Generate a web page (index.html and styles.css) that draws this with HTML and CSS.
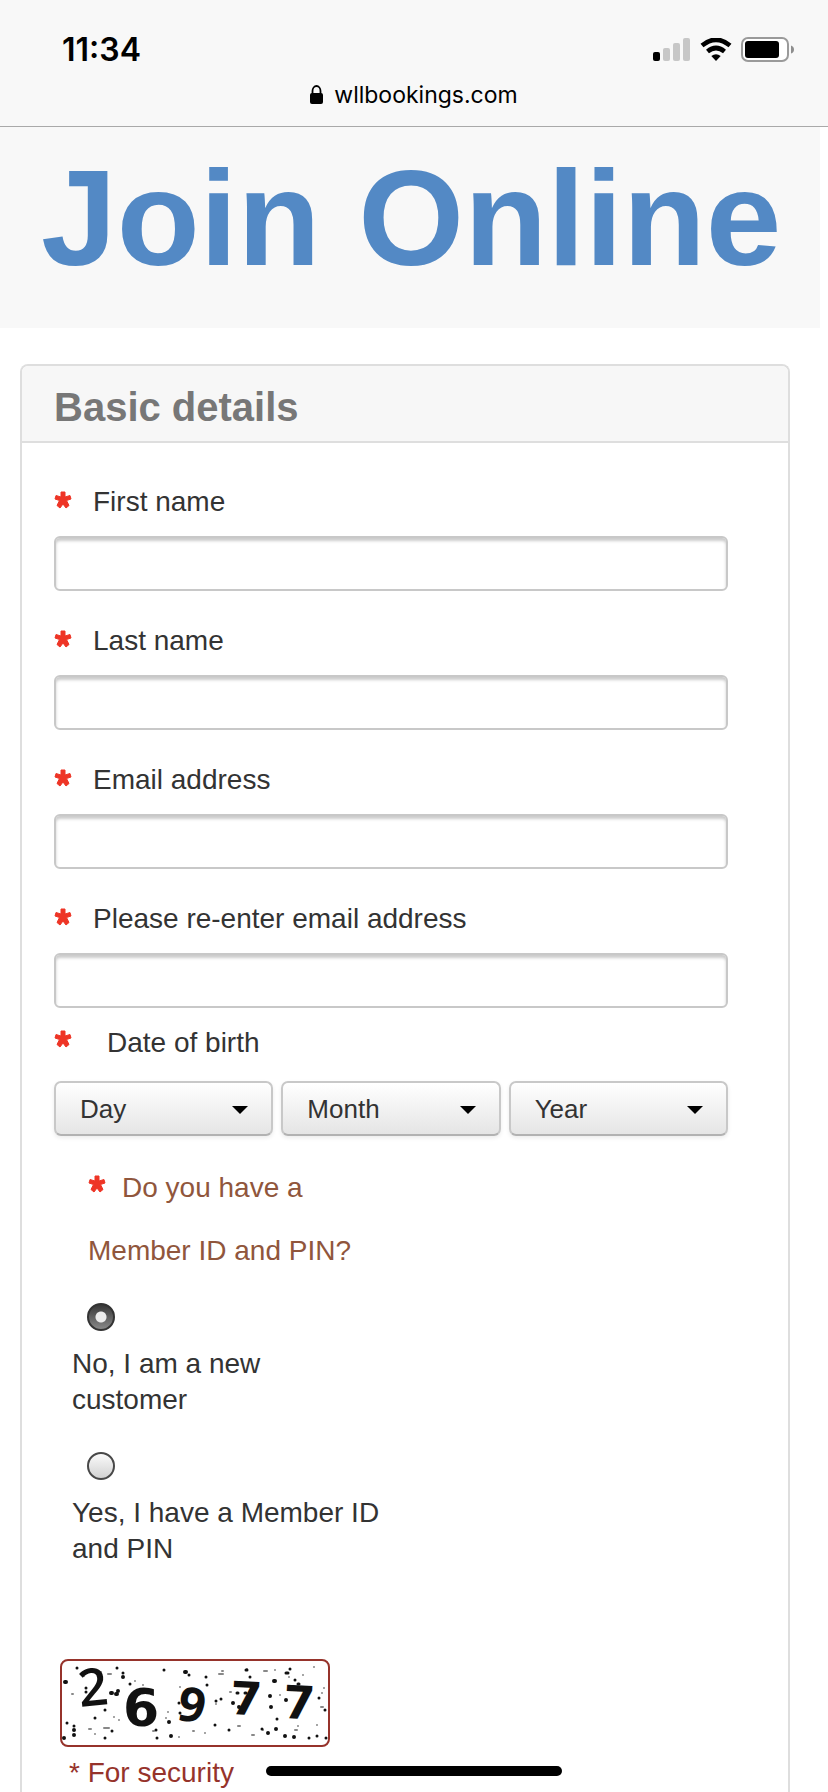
FILE: index.html
```html
<!DOCTYPE html>
<html lang="en">
<head>
    <meta charset="UTF-8">
    <meta name="viewport" content="width=device-width, initial-scale=1.0">
    <title>Join Online</title>
    <link rel="stylesheet" href="styles.css">
</head>
<body>
    <svg class="defs" width="0" height="0" aria-hidden="true">
        <symbol id="star" viewBox="0 0 18 18">
            <path d="M7 1h4v5l5-1.500 1 3.500-4.500 1.500 2.500 5-3 2.500-3-4-3 4-3-2.500 2.500-5L1 8l1-3.500L7 6Z" fill="#ee3526" stroke="#ee3526" stroke-width="1" stroke-linejoin="round"/>
        </symbol>
    </svg>

    <header class="browser-bar">
        <div class="status">
            <span class="time">11:34</span>
            <div class="status-icons">
                <svg width="38" height="24" viewBox="0 0 38 24" aria-hidden="true">
                    <rect x="0" y="14" width="7" height="9" rx="2" fill="#000"/>
                    <rect x="10" y="10" width="7" height="13" rx="2" fill="#c7c7c7"/>
                    <rect x="20" y="5" width="7" height="18" rx="2" fill="#c7c7c7"/>
                    <rect x="30" y="0" width="7" height="23" rx="2" fill="#c7c7c7"/>
                </svg>
                <svg width="32" height="24" viewBox="0 0 32 24" aria-hidden="true">
                    <path d="M2 7.500Q16 -4 30 7.500" fill="none" stroke="#000" stroke-width="4.600"/>
                    <path d="M7.500 13.500Q16 6.500 24.500 13.500" fill="none" stroke="#000" stroke-width="4.600"/>
                    <path d="M11.300 18Q16 14.300 20.700 18L16 23Z" fill="#000"/>
                </svg>
                <svg width="54" height="26" viewBox="0 0 54 26" aria-hidden="true">
                    <rect x="1" y="1" width="46" height="23" rx="6" fill="#fff" stroke="#9a9a9a" stroke-width="2"/>
                    <rect x="4" y="4" width="34" height="17" rx="3" fill="#000"/>
                    <path d="M50 8.500Q53 9.500 53 12.500Q53 15.500 50 16.500Z" fill="#8e8e8e"/>
                </svg>
            </div>
        </div>
        <div class="address">
            <svg width="14" height="20" viewBox="0 0 14 20" aria-hidden="true">
                <path d="M2.500 9V6a4 5 0 0 1 8 0V9" fill="none" stroke="#000" stroke-width="1.800"/>
                <rect x="0" y="8" width="13" height="11" rx="2" fill="#000"/>
            </svg>
            <span>wllbookings.com</span>
        </div>
    </header>

    <div class="banner">
        <h1>Join Online</h1>
    </div>

    <main class="panel">
        <h2>Basic details</h2>
        <form class="panel-body">
            <div class="field">
                <label for="firstName"><svg class="star"><use href="#star"/></svg>First name</label>
                <input type="text" id="firstName" name="firstName" required>
            </div>
            <div class="field">
                <label for="lastName"><svg class="star"><use href="#star"/></svg>Last name</label>
                <input type="text" id="lastName" name="lastName" required>
            </div>
            <div class="field">
                <label for="email"><svg class="star"><use href="#star"/></svg>Email address</label>
                <input type="email" id="email" name="email" required>
            </div>
            <div class="field">
                <label for="emailConfirm"><svg class="star"><use href="#star"/></svg>Please re-enter email address</label>
                <input type="email" id="emailConfirm" name="emailConfirm" required>
            </div>

            <div class="dob" role="group" aria-labelledby="dobLabel">
                <div class="dob-label" id="dobLabel"><svg class="star"><use href="#star"/></svg>Date of birth</div>
                <div class="dob-selects">
                    <div class="select-box">
                        <select name="day" aria-label="Day"><option>Day</option></select>
                    </div>
                    <div class="select-box">
                        <select name="month" aria-label="Month"><option>Month</option></select>
                    </div>
                    <div class="select-box">
                        <select name="year" aria-label="Year"><option>Year</option></select>
                    </div>
                </div>
            </div>

            <div class="member" role="radiogroup" aria-labelledby="memberLabel">
                <p class="question" id="memberLabel"><svg class="star"><use href="#star"/></svg>Do you have a Member ID and PIN?</p>
                <div class="option">
                    <input type="radio" id="memberNo" name="member" checked>
                    <label for="memberNo">No, I am a new customer</label>
                </div>
                <div class="option">
                    <input type="radio" id="memberYes" name="member">
                    <label for="memberYes">Yes, I have a Member ID and PIN</label>
                </div>
            </div>

            <div class="security">
                <svg class="code" width="270" height="88" viewBox="-2 -2 270 88">
                    <rect x="-1" y="-1" width="268" height="86" rx="7" fill="#fff" stroke="#96332b" stroke-width="2"/>
                    <!-- speckles, small to large -->
                    <g fill="none" stroke="#111" stroke-linecap="round">
                        <path stroke="#888" stroke-width="2" d="M10 33h1M22 15h0M46 13h3M39 11h0M27 68h2M33 73h0M42 67h5M57 59h0M52 56h0M73 20h0M81 24h0M91 70h1M104 57h0M117 76h0M122 59h1M131 70h1M143 72h0M157 13h4M160 10h1M168 31h1M185 8h0M176 65h2M190 74h2M202 10h3M213 9h0M218 34h0M227 16h0M233 69h2M236 65h0M241 14h0M252 6h0M260 32h0M259 46h2M262 27h0M255 64h0M118 26h0M154 43h0M201 69h0M106 51h0"/>
                        <path stroke-width="3" d="M15 7h0M55 7h0M24 27h0M24 31h0M43 49h0M5 62h0M12 65h0M33 57h0M50 70h0M43 77h0M61 12h0M68 23h0M102 9h0M94 69h0M117 42h0M118 52h0M127 14h0M144 16h0M145 24h0M159 38h0M154 40h0M153 64h0M167 69h0M188 16h0M184 9h1M200 68h0M215 58h0M224 12h2M228 8h0M233 19h0M236 23h1M255 75h0M247 77h0M257 37h0M263 49h0M264 77h0M95 77h0M175 32h1M183 32h1"/>
                        <path stroke-width="4" d="M3 21h1M49 32h1M54 33h1M56 30h0M61 16h0M2 77h0M12 69h0M12 74h0M107 61h0M123 11h1M109 75h0M88 50h1M171 42h0M177 46h0M182 45h0M208 35h0M212 20h1M209 46h0M214 68h0M206 72h0M223 75h0M232 76h0M224 39h0M123 40h0"/>
                    </g>
                    <g class="digits">
                        <text x="18" y="46" class="digit-light" transform="rotate(-6 18 46)">2</text>
                        <text x="61" y="65" class="digit-bold">6</text>
                        <text x="116" y="61" class="digit-nine" transform="rotate(10 130 46)">9</text>
                        <text x="168" y="54" class="digit-seven" transform="rotate(3 185 38)">7</text>
                        <text x="221" y="58" class="digit-seven" transform="rotate(3 238 42)">7</text>
                    </g>
                </svg>
                <p class="security-note">* For security</p>
            </div>
        </form>
    </main>

    <div class="home-indicator"></div>
</body>
</html>
```
FILE: styles.css
```css
* {
    box-sizing: border-box;
}
body {
    display: flex;
    flex-direction: column;
    min-height: 100vh;
    margin: 0;
    background-color: #fff;
    color: #333;
    font-family: 'Liberation Sans', Arial, sans-serif;
    font-size: 28px;
    line-height: 36px;
}
.defs {
    position: absolute;
}

/* Browser bar */
.browser-bar {
    height: 127px;
    padding-top: 30px;
    border-bottom: 1px solid #a9a9a9;
    background-color: #f8f8f8;
    color: #000;
    font-family: Inter, sans-serif;
}
.status {
    display: flex;
    justify-content: space-between;
    align-items: center;
    height: 40px;
    padding: 0 33px 0 62px;
}
.time {
    font-size: 32px;
    font-weight: 600;
}
.status-icons {
    display: flex;
    align-items: center;
    gap: 9px;
}
.address {
    display: flex;
    justify-content: center;
    align-items: center;
    gap: 10px;
    height: 50px;
    font-size: 23px;
}

/* Banner */
.banner {
    margin-right: 8px;
    padding: 15px 41px 34px;
    background-color: #f8f8f8;
}
h1 {
    margin: 0;
    color: #5389c5;
    font-size: 136px;
    line-height: 152px;
    white-space: nowrap;
}

/* Form panel */
.panel {
    flex: 1;
    margin: 36px 38px 0 20px;
    border: 2px solid #dedede;
    border-bottom: 0;
    border-radius: 8px 8px 0 0;
}
h2 {
    margin: 0;
    padding: 19px 32px 11px;
    border-bottom: 2px solid #dedede;
    border-radius: 6px 6px 0 0;
    background-color: #f7f7f7;
    color: #777;
    font-size: 40px;
    line-height: 45px;
}
.panel-body {
    padding: 41px 60px 0 32px;
}
.star {
    flex: none;
    width: 18px;
    height: 18px;
}
.field {
    margin-bottom: 32px;
}
.field label {
    display: flex;
    align-items: center;
    gap: 21px;
    margin-bottom: 16px;
}
.field label .star {
    margin-bottom: 4px;
}
.field input {
    display: block;
    width: 100%;
    height: 55px;
    padding: 0 16px;
    border: 2px solid #c8c8c8;
    border-radius: 6px;
    background-color: #fff;
    box-shadow: inset 0 3px 3px #ccc;
    color: #333;
    font: inherit;
}

.dob {
    margin-top: -15px;
}
.dob-label {
    display: flex;
    align-items: flex-start;
    gap: 35px;
    margin-bottom: 20px;
}
.dob-label .star {
    margin-top: 5px;
}
.dob-selects {
    display: grid;
    grid-template-columns: repeat(3, 1fr);
    gap: 8px;
}
.select-box {
    position: relative;
}
.select-box::after {
    content: '';
    position: absolute;
    top: 25px;
    right: 25px;
    border: 8px solid transparent;
    border-top-color: #000;
    border-bottom: 0;
    pointer-events: none;
}
select {
    display: block;
    width: 100%;
    height: 55px;
    padding: 0 40px 0 24px;
    border: 2px solid #c8c8c8;
    border-bottom-color: #b2b2b2;
    border-radius: 7px;
    appearance: none;
    background: linear-gradient(#fff, #e5e5e5);
    box-shadow: 0 2px 4px rgba(0, 0, 0, 0.08);
    color: #333;
    font: inherit;
    font-size: 26px;
}

.question {
    max-width: 304px;
    margin: 20px 0 21px;
    padding-left: 34px;
    color: #90563c;
    line-height: 63px;
}
.question .star {
    margin-right: 16px;
    vertical-align: 4px;
}
.option {
    max-width: 327px;
    margin-bottom: 34px;
    padding-left: 18px;
}
.option label {
    display: block;
}
.option input {
    display: block;
    width: 28px;
    height: 28px;
    margin: 0 0 15px 15px;
    border: 2px solid #484848;
    border-radius: 50%;
    appearance: none;
    background: linear-gradient(#fafafa, #d2d2d2);
}
.option input:checked {
    border-color: #333;
    background: radial-gradient(circle, #ececec 5px, transparent 6px), linear-gradient(#383838, #888);
}

.security {
    margin: 92px 0 0 6px;
}
.code {
    display: block;
    overflow: visible;
}
.digits {
    fill: #111;
}
.digit-light {
    font: 600 52px 'Open Sans', sans-serif;
}
.digit-bold {
    font: bold 52px 'DejaVu Sans', sans-serif;
}
.digit-nine {
    font: bold 48px 'Open Sans', sans-serif;
}
.digit-seven {
    font: bold 46px 'DejaVu Sans', sans-serif;
}
.security-note {
    margin: 8px 0 0;
    padding-left: 9px;
    color: #96332b;
}

.home-indicator {
    position: fixed;
    bottom: 16px;
    left: 50%;
    width: 296px;
    height: 10px;
    margin-left: -148px;
    border-radius: 5px;
    background-color: #000;
}
```
